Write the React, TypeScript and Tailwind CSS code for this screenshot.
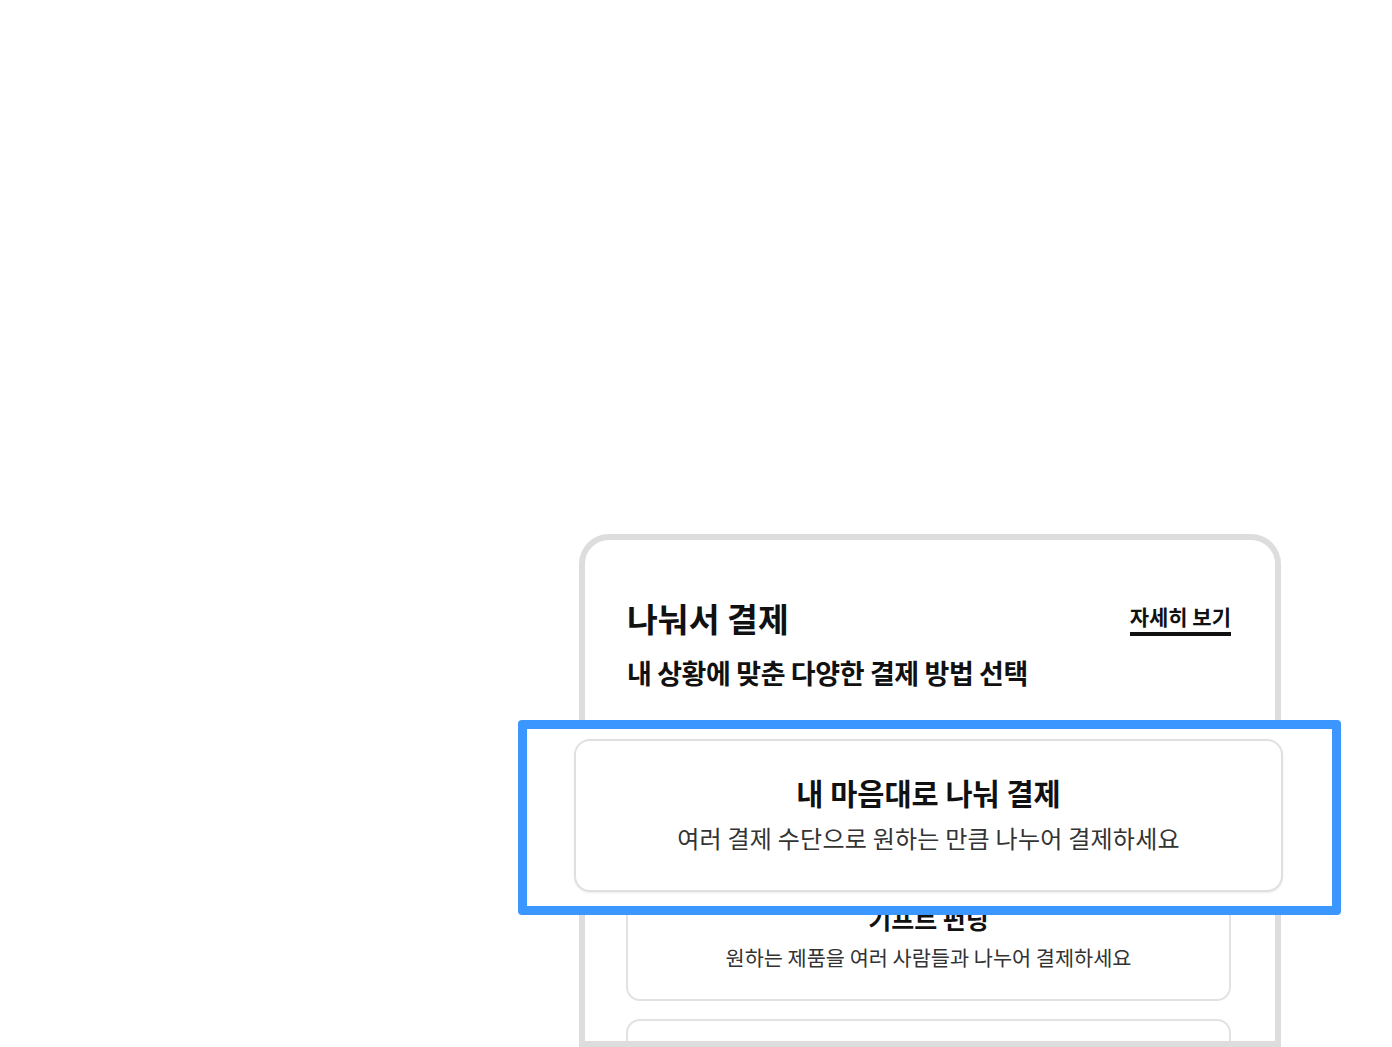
import React from "react";

const font = { fontFamily: '"Noto Sans CJK KR", "Noto Sans", sans-serif' };

function Card({ title, desc, hidden }: { title?: string; desc?: string; hidden?: boolean }) {
  return (
    <div className="box-border h-[130px] rounded-[14px] border-2 border-[#e2e2e2] bg-white flex flex-col items-center pt-[30px]">
      {title && (
        <div className={`text-[25px] leading-[30px] font-bold text-[#111] ${hidden ? "invisible" : ""}`}>{title}</div>
      )}
      {desc && (
        <div className={`mt-[10px] text-[20.8px] leading-[28px] text-[#333] ${hidden ? "invisible" : ""}`}>{desc}</div>
      )}
    </div>
  );
}

export default function App() {
  return (
    <div className="relative h-[1047px] w-[1392px] overflow-hidden bg-white" style={font}>
      <div className="pt-[534px] pl-[579px]">
        <div className="box-border h-[513px] w-[702px] overflow-hidden rounded-t-[30px] border-[6px] border-[#dddddd] bg-white">
          <div className="pt-[57px] pl-[41px] pr-[44px]">
            <div className="flex items-start justify-between pl-[1px]">
              <div className="text-[33.5px] leading-[41px] font-bold text-[#111]">나눠서 결제</div>
              <div className="mt-[7px] border-b-[4px] border-[#111] pb-[4px] text-[21px] leading-[24px] font-bold text-[#111]">
                자세히 보기
              </div>
            </div>
            <div className="mt-[17px] pl-[1px] text-[27px] leading-[36px] font-bold text-[#111] tracking-[-0.4px]">
              내 상황에 맞춘 다양한 결제 방법 선택
            </div>
            <div className="mt-[32px] flex flex-col gap-[18px]">
              <Card title="내 마음대로 나눠 결제" desc="여러 결제 수단으로 원하는 만큼 나누어 결제하세요" hidden />
              <Card title="기프트 펀딩" desc="원하는 제품을 여러 사람들과 나누어 결제하세요" />
              <Card />
            </div>
          </div>
        </div>
      </div>

      {/* highlight overlay */}
      <div className="absolute left-[518px] top-[720px] box-border h-[195px] w-[823px] rounded-[4px] border-[9px] border-[#3b96ff] bg-white pl-[47px] pt-[10px]">
        <div className="box-border h-[153px] w-[709px] rounded-[16px] border-2 border-[#e0e0e0] bg-white shadow-[0_1px_2px_rgba(0,0,0,0.08)] flex flex-col items-center pt-[33px]">
          <div className="text-[29.5px] leading-[36px] font-bold text-[#111]">내 마음대로 나눠 결제</div>
          <div className="mt-[12px] text-[24px] leading-[32px] text-[#333] tracking-[0.25px]">
            여러 결제 수단으로 원하는 만큼 나누어 결제하세요
          </div>
        </div>
      </div>
    </div>
  );
}
